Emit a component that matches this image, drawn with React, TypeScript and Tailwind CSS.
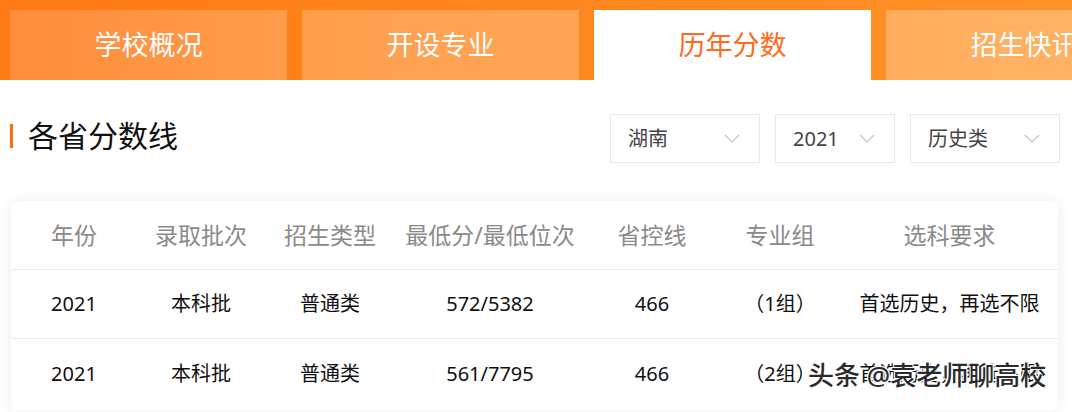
import React from 'react';

const tabs = [
  { label: '学校概况', bg: 'bg-gradient-to-r from-[#ff8d3c] to-[#ff9c4b]' },
  { label: '开设专业', bg: 'bg-gradient-to-r from-[#ff9e4d] to-[#ffa655]' },
  { label: '历年分数', bg: 'bg-white', active: true },
  { label: '招生快讯', bg: 'bg-gradient-to-r from-[#ffad5d] to-[#ffb466]' },
];

const filters = [
  { value: '湖南', w: 'w-[150px]' },
  { value: '2021', w: 'w-[120px]' },
  { value: '历史类', w: 'w-[150px]' },
];

const cols = 'grid grid-cols-[126px_128px_130px_190px_134px_122px_217px]';

const headers = ['年份', '录取批次', '招生类型', '最低分/最低位次', '省控线', '专业组', '选科要求'];

const rows = [
  ['2021', '本科批', '普通类', '572/5382', '466', '（1组）', '首选历史，再选不限'],
  ['2021', '本科批', '普通类', '561/7795', '466', '（2组）', '首选历史，再选不限'],
];

function Chevron() {
  return (
    <svg width="16" height="9" viewBox="0 0 16 9" fill="none">
      <path d="M1 1l7 7 7-7" stroke="#c4c4c4" strokeWidth="1.2" />
    </svg>
  );
}

export default function App() {
  return (
    <div className="relative w-[1072px] h-[412px] overflow-hidden bg-white font-['Noto_Sans','Noto_Sans_CJK_SC',sans-serif]">
      {/* TAB BAR */}
      <div className="flex gap-[15px] pt-[10px] pl-[10px] bg-gradient-to-r from-[#ff7a12] to-[#ff942a] w-[1200px]">
        {tabs.map((t) => (
          <div
            key={t.label}
            className={`w-[277px] h-[70px] shrink-0 flex items-center justify-center text-[27px] ${t.bg} ${
              t.active ? 'text-[#ff6a1c]' : 'text-white'
            }`}
          >
            {t.label}
          </div>
        ))}
      </div>

      {/* TITLE + FILTERS */}
      <div className="flex items-start justify-between pt-[34px] pl-[10px] pr-[12px]">
        <div className="flex items-center gap-[15px] pt-[5px]">
          <span className="w-[3px] h-[24px] bg-[#ff6a12]" />
          <span className="text-[30px] leading-[34px] text-[#111]">各省分数线</span>
        </div>
        <div className="flex gap-[15px]">
          {filters.map((f) => (
            <div
              key={f.value}
              className={`${f.w} h-[49px] border border-[#e8e8e8] flex items-center justify-between pl-[17px] pr-[19px] text-[20px] text-[#444]`}
            >
              <span>{f.value}</span>
              <Chevron />
            </div>
          ))}
        </div>
      </div>

      {/* TABLE CARD */}
      <div className="mt-[38px] ml-[11px] w-[1047px] h-[210px] rounded-[8px] bg-white shadow-[0_0_16px_rgba(0,0,0,0.08)]">
        <div className={`${cols} h-[69px] items-center border-b border-[#ececec] text-[23px] text-[#8a8a8a]`}>
          {headers.map((h) => (
            <div key={h} className="text-center">
              {h}
            </div>
          ))}
        </div>
        {rows.map((r, i) => (
          <div
            key={i}
            className={`${cols} h-[69px] items-center text-[20px] text-[#111] ${i === 0 ? 'border-b border-[#ececec]' : ''}`}
          >
            {r.map((c, j) => (
              <div key={j} className="text-center whitespace-nowrap">
                {c}
              </div>
            ))}
          </div>
        ))}
      </div>

      {/* WATERMARK */}
      <div className="absolute left-[808px] top-[358px] text-[26px] leading-[34px] font-medium text-[#2a2a2a] [text-shadow:1px_1px_0_#fff,-1px_-1px_0_#fff,1px_-1px_0_#fff,-1px_1px_0_#fff] whitespace-nowrap">
        头条 @袁老师聊高校
      </div>
    </div>
  );
}
